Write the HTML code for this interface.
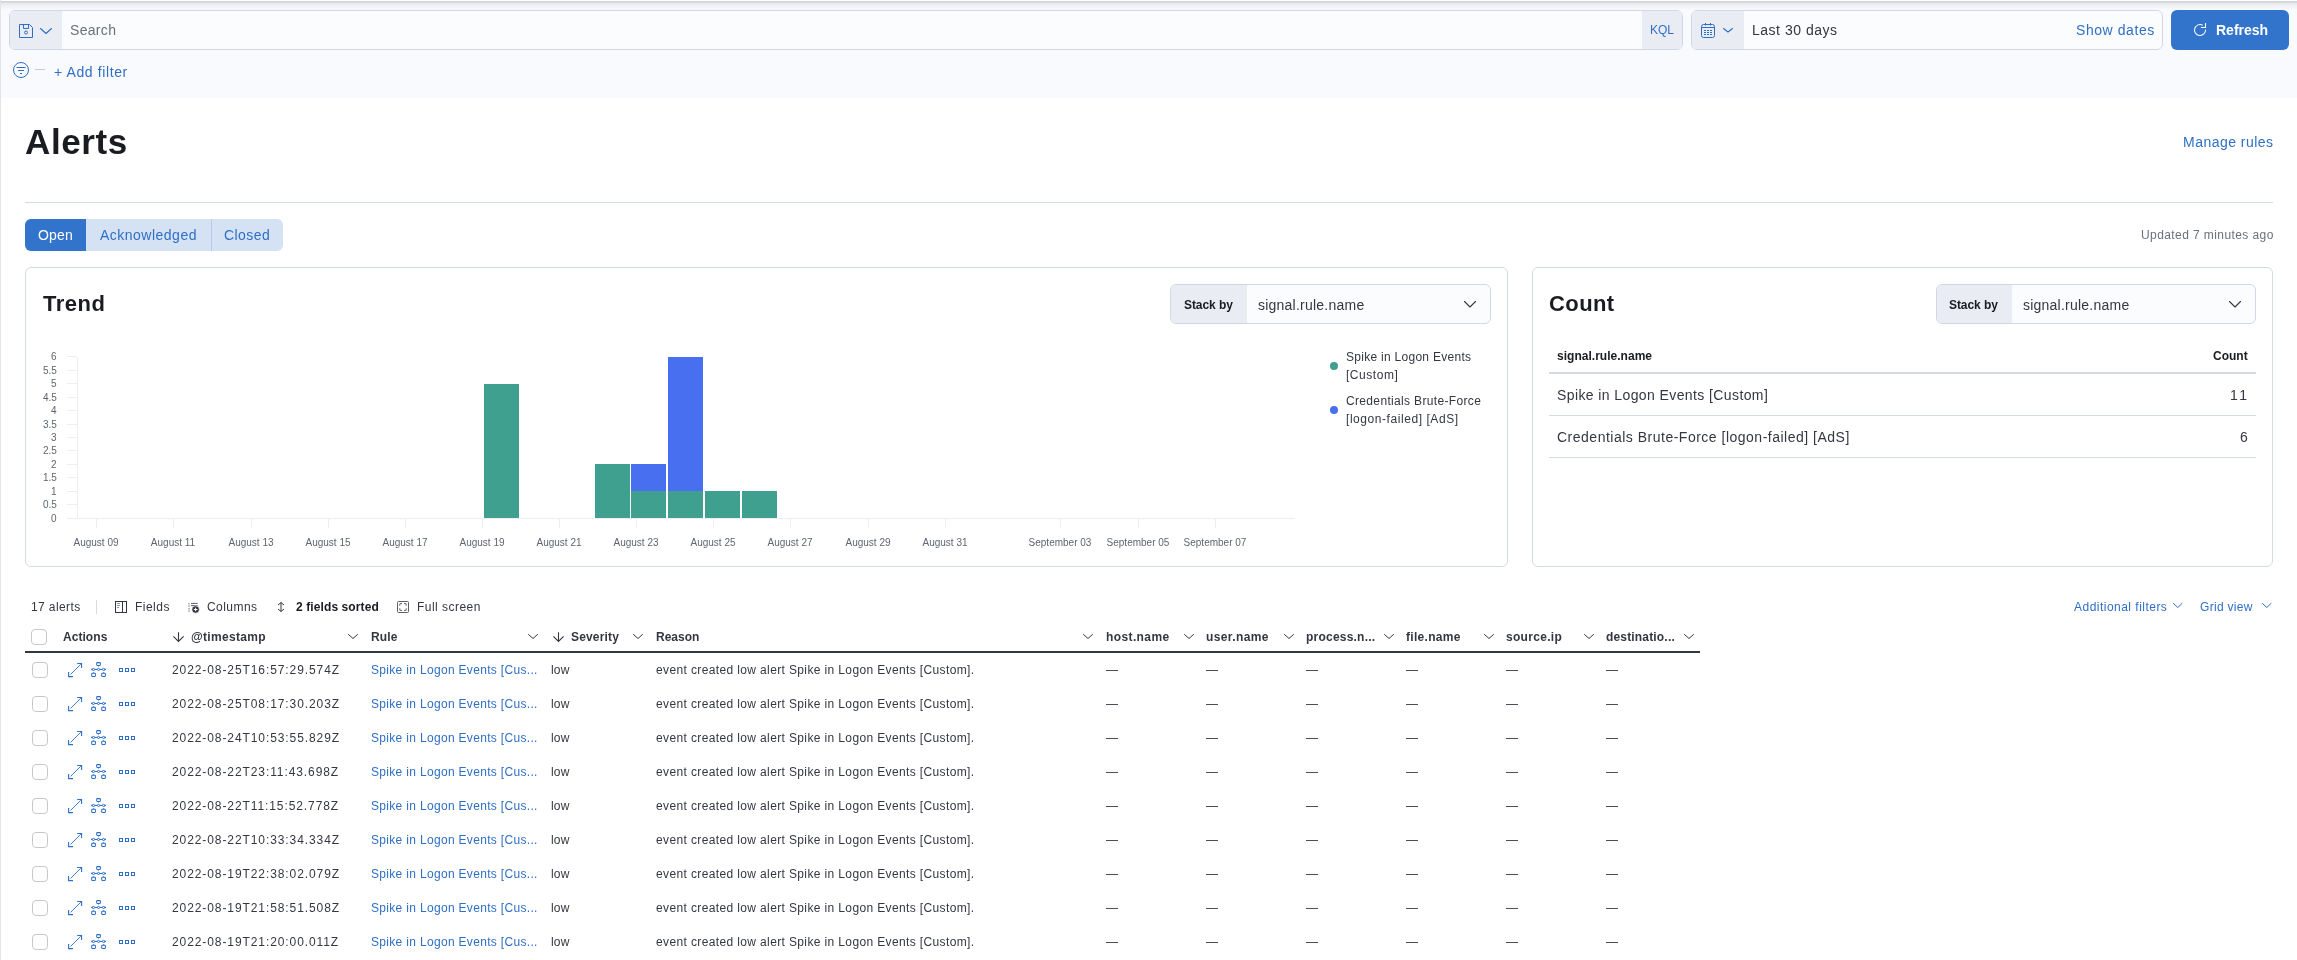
<!DOCTYPE html>
<html><head><meta charset="utf-8">
<style>
html,body{margin:0;padding:0;}
body{width:2297px;height:960px;overflow:hidden;position:relative;background:#fff;font-family:"Liberation Sans",sans-serif;color:#343741;}
.a{position:absolute;white-space:nowrap;will-change:transform;}
svg{position:absolute;overflow:visible;}
.box{position:absolute;box-sizing:border-box;border:1px solid #d3d6e6;border-radius:6px;background:#fbfcfd;overflow:hidden;}
.pre{position:absolute;top:0;bottom:0;background:#e9ecf3;}
.panel{position:absolute;box-sizing:border-box;border:1px solid #d3dae6;border-radius:6px;background:#fff;}
</style></head><body>
<div class="a" style="left:0px;top:0px;width:2297px;height:98px;background:#f9fafd;"></div>
<div class="a" style="left:0px;top:0px;width:2297px;height:10px;background:linear-gradient(#ffffff 0px 1px,#ced2dd 1px 2px,#dcdcdf 2px 3px,#e7e8ea 3px 4px,#ecedf0 4px 5px,#eff0f3 5px 6px,#f2f3f6 6px 7px,#f4f5f8 7px 8px,#f6f7fa 8px 9px,#f8f9fc 9px 10px);"></div>
<div class="a" style="left:0px;top:0px;width:1px;height:960px;background:#e3e4e9;z-index:5;"></div>
<div class="box" style="left:9px;top:10px;width:1674px;height:40px;"><div class="pre" style="left:0;width:52px;"></div><div class="pre" style="left:1632px;width:42px;"></div></div>
<svg style="left:19px;top:24px;" width="14" height="14" viewBox="0 0 14 14"><path d="M0.5 0.5 H10.5 L13.5 3.5 V13.5 H0.5 Z" fill="none" stroke="#2d6fc7" stroke-width="1"/><path d="M4.5 0.5 V4.5 H9.5 V0.5" fill="none" stroke="#2d6fc7" stroke-width="1"/><circle cx="7" cy="8.5" r="1.5" fill="none" stroke="#2d6fc7" stroke-width="1"/></svg>
<svg style="left:40px;top:28px;" width="12" height="6" viewBox="0 0 12 6"><path d="M0.5 0.5 L6.0 5.5 L11.5 0.5" fill="none" stroke="#2d6fc7" stroke-width="1.1" stroke-linecap="round" stroke-linejoin="round"/></svg>
<div class="a" style="left:70px;top:22px;font-size:14px;font-weight:400;color:#69707d;letter-spacing:0.32px;">Search</div>
<div class="a" style="left:1650px;top:23px;font-size:12px;font-weight:400;color:#2f6fc6;letter-spacing:0px;">KQL</div>
<div class="box" style="left:1691px;top:10px;width:472px;height:40px;"><div class="pre" style="left:0;width:52px;"></div></div>
<svg style="left:1701px;top:23px;" width="14" height="15" viewBox="0 0 14 15"><rect x="0.5" y="1.5" width="13" height="13" rx="2" fill="none" stroke="#2d6fc7" stroke-width="1"/><path d="M0.5 4.5 H13.5 M4.5 0 V2.5 M9.5 0 V2.5" stroke="#2d6fc7" stroke-width="1"/><path d="M3 7.5 H5 M6 7.5 H8 M9 7.5 H11 M3 9.5 H5 M6 9.5 H8 M9 9.5 H11 M3 11.5 H5 M6 11.5 H8 M9 11.5 H11" stroke="#2d6fc7" stroke-width="1"/></svg>
<svg style="left:1723px;top:28px;" width="10" height="4.5" viewBox="0 0 10 4.5"><path d="M0.5 0.5 L5.0 4.0 L9.5 0.5" fill="none" stroke="#2d6fc7" stroke-width="1.1" stroke-linecap="round" stroke-linejoin="round"/></svg>
<div class="a" style="left:1752px;top:22px;font-size:14px;font-weight:400;color:#343741;letter-spacing:0.51px;">Last 30 days</div>
<div class="a" style="left:2076px;top:22px;font-size:14px;font-weight:400;color:#2f6fc6;letter-spacing:0.57px;">Show dates</div>
<div class="a" style="left:2171px;top:10px;width:118px;height:40px;background:#3274cc;border-radius:6px;"></div>
<svg style="left:2194px;top:22px;" width="12" height="14" viewBox="0 0 12 14"><path d="M8.75 3.24 A5.5 5.5 0 1 0 11.5 7.6" fill="none" stroke="#fff" stroke-width="1.05"/><path d="M11.5 0.9 V5.5 H7" fill="none" stroke="#fff" stroke-width="1.05"/></svg>
<div class="a" style="left:2216px;top:22px;font-size:14px;font-weight:700;color:#fff;letter-spacing:0px;">Refresh</div>
<svg style="left:13px;top:62px;" width="16" height="16" viewBox="0 0 16 16"><circle cx="8" cy="8" r="7.5" fill="none" stroke="#2d6fc7" stroke-width="1"/><path d="M3.5 5.5 H12.5 M5 8.5 H11 M7 11.5 H9" stroke="#2d6fc7" stroke-width="1"/></svg>
<div class="a" style="left:35px;top:69px;width:10px;height:1px;background:#c5cbd8;"></div>
<div class="a" style="left:54px;top:64px;font-size:14px;font-weight:400;color:#2f6fc6;letter-spacing:0.61px;">+ Add filter</div>
<div class="a" style="left:25px;top:122px;font-size:35px;font-weight:700;color:#1a1c21;letter-spacing:0.6px;">Alerts</div>
<div class="a" style="left:2183px;top:134px;font-size:14px;font-weight:400;color:#2f6fc6;letter-spacing:0.47px;">Manage rules</div>
<div class="a" style="left:25px;top:202px;width:2248px;height:1px;background:#d3dae6;"></div>
<div class="a" style="left:25px;top:219px;width:258px;height:32px;border-radius:6px;background:#d5e2f3;overflow:hidden;"><div class="a" style="left:0;top:0;width:61px;height:32px;background:#3274cc;"></div><div class="a" style="left:186px;top:0;width:1px;height:32px;background:#b6cae8;"></div></div>
<div class="a" style="left:38px;top:227px;font-size:14px;font-weight:400;color:#fff;letter-spacing:0.17px;">Open</div>
<div class="a" style="left:100px;top:227px;font-size:14px;font-weight:400;color:#2f6fc6;letter-spacing:0.49px;">Acknowledged</div>
<div class="a" style="left:224px;top:227px;font-size:14px;font-weight:400;color:#2f6fc6;letter-spacing:0.44px;">Closed</div>
<div class="a" style="left:2141px;top:228px;font-size:12px;font-weight:400;color:#69707d;letter-spacing:0.415px;">Updated 7 minutes ago</div>
<div class="panel" style="left:25px;top:267px;width:1483px;height:300px;"></div>
<div class="panel" style="left:1532px;top:267px;width:741px;height:300px;"></div>
<div class="a" style="left:43px;top:291px;font-size:22px;font-weight:700;color:#1a1c21;letter-spacing:0.5px;">Trend</div>
<div class="a" style="left:1549px;top:291px;font-size:22px;font-weight:700;color:#1a1c21;letter-spacing:0.4px;">Count</div>
<div class="box" style="left:1170px;top:284px;width:321px;height:40px;"><div class="pre" style="left:0;width:76px;"></div></div>
<div class="a" style="left:1184px;top:298px;font-size:12px;font-weight:700;color:#1a1c21;letter-spacing:-0.07px;">Stack by</div>
<div class="a" style="left:1258px;top:297px;font-size:14px;font-weight:400;color:#343741;letter-spacing:0.23px;">signal.rule.name</div>
<svg style="left:1464px;top:301px;" width="12" height="6.5" viewBox="0 0 12 6.5"><path d="M0.5 0.5 L6.0 6.0 L11.5 0.5" fill="none" stroke="#343741" stroke-width="1.1" stroke-linecap="round" stroke-linejoin="round"/></svg>
<div class="box" style="left:1936px;top:284px;width:320px;height:40px;"><div class="pre" style="left:0;width:75px;"></div></div>
<div class="a" style="left:1949px;top:298px;font-size:12px;font-weight:700;color:#1a1c21;letter-spacing:-0.07px;">Stack by</div>
<div class="a" style="left:2023px;top:297px;font-size:14px;font-weight:400;color:#343741;letter-spacing:0.23px;">signal.rule.name</div>
<svg style="left:2229px;top:301px;" width="12" height="6.5" viewBox="0 0 12 6.5"><path d="M0.5 0.5 L6.0 6.0 L11.5 0.5" fill="none" stroke="#343741" stroke-width="1.1" stroke-linecap="round" stroke-linejoin="round"/></svg>
<div class="a" style="left:77px;top:357px;width:1px;height:161px;background:#eceef2;"></div>
<div class="a" style="left:67px;top:518px;width:1228px;height:1px;background:#eceef2;"></div>
<div class="a" style="left:67px;top:518px;width:10px;height:1px;background:#eceef2;"></div>
<div class="a" style="right:2240px;top:513px;font-size:10px;color:#5f6570;">0</div>
<div class="a" style="left:67px;top:504px;width:10px;height:1px;background:#eceef2;"></div>
<div class="a" style="right:2240px;top:499px;font-size:10px;color:#5f6570;">0.5</div>
<div class="a" style="left:67px;top:491px;width:10px;height:1px;background:#eceef2;"></div>
<div class="a" style="right:2240px;top:486px;font-size:10px;color:#5f6570;">1</div>
<div class="a" style="left:67px;top:477px;width:10px;height:1px;background:#eceef2;"></div>
<div class="a" style="right:2240px;top:472px;font-size:10px;color:#5f6570;">1.5</div>
<div class="a" style="left:67px;top:464px;width:10px;height:1px;background:#eceef2;"></div>
<div class="a" style="right:2240px;top:459px;font-size:10px;color:#5f6570;">2</div>
<div class="a" style="left:67px;top:450px;width:10px;height:1px;background:#eceef2;"></div>
<div class="a" style="right:2240px;top:445px;font-size:10px;color:#5f6570;">2.5</div>
<div class="a" style="left:67px;top:437px;width:10px;height:1px;background:#eceef2;"></div>
<div class="a" style="right:2240px;top:432px;font-size:10px;color:#5f6570;">3</div>
<div class="a" style="left:67px;top:424px;width:10px;height:1px;background:#eceef2;"></div>
<div class="a" style="right:2240px;top:419px;font-size:10px;color:#5f6570;">3.5</div>
<div class="a" style="left:67px;top:410px;width:10px;height:1px;background:#eceef2;"></div>
<div class="a" style="right:2240px;top:405px;font-size:10px;color:#5f6570;">4</div>
<div class="a" style="left:67px;top:397px;width:10px;height:1px;background:#eceef2;"></div>
<div class="a" style="right:2240px;top:392px;font-size:10px;color:#5f6570;">4.5</div>
<div class="a" style="left:67px;top:383px;width:10px;height:1px;background:#eceef2;"></div>
<div class="a" style="right:2240px;top:378px;font-size:10px;color:#5f6570;">5</div>
<div class="a" style="left:67px;top:370px;width:10px;height:1px;background:#eceef2;"></div>
<div class="a" style="right:2240px;top:365px;font-size:10px;color:#5f6570;">5.5</div>
<div class="a" style="left:67px;top:356px;width:10px;height:1px;background:#eceef2;"></div>
<div class="a" style="right:2240px;top:351px;font-size:10px;color:#5f6570;">6</div>
<div class="a" style="left:96px;top:518px;width:1px;height:10px;background:#eceef2;"></div>
<div class="a" style="left:-4px;width:200px;text-align:center;top:537px;font-size:10px;color:#5f6570;">August 09</div>
<div class="a" style="left:173px;top:518px;width:1px;height:10px;background:#eceef2;"></div>
<div class="a" style="left:73px;width:200px;text-align:center;top:537px;font-size:10px;color:#5f6570;">August 11</div>
<div class="a" style="left:251px;top:518px;width:1px;height:10px;background:#eceef2;"></div>
<div class="a" style="left:151px;width:200px;text-align:center;top:537px;font-size:10px;color:#5f6570;">August 13</div>
<div class="a" style="left:328px;top:518px;width:1px;height:10px;background:#eceef2;"></div>
<div class="a" style="left:228px;width:200px;text-align:center;top:537px;font-size:10px;color:#5f6570;">August 15</div>
<div class="a" style="left:405px;top:518px;width:1px;height:10px;background:#eceef2;"></div>
<div class="a" style="left:305px;width:200px;text-align:center;top:537px;font-size:10px;color:#5f6570;">August 17</div>
<div class="a" style="left:482px;top:518px;width:1px;height:10px;background:#eceef2;"></div>
<div class="a" style="left:382px;width:200px;text-align:center;top:537px;font-size:10px;color:#5f6570;">August 19</div>
<div class="a" style="left:559px;top:518px;width:1px;height:10px;background:#eceef2;"></div>
<div class="a" style="left:459px;width:200px;text-align:center;top:537px;font-size:10px;color:#5f6570;">August 21</div>
<div class="a" style="left:636px;top:518px;width:1px;height:10px;background:#eceef2;"></div>
<div class="a" style="left:536px;width:200px;text-align:center;top:537px;font-size:10px;color:#5f6570;">August 23</div>
<div class="a" style="left:713px;top:518px;width:1px;height:10px;background:#eceef2;"></div>
<div class="a" style="left:613px;width:200px;text-align:center;top:537px;font-size:10px;color:#5f6570;">August 25</div>
<div class="a" style="left:790px;top:518px;width:1px;height:10px;background:#eceef2;"></div>
<div class="a" style="left:690px;width:200px;text-align:center;top:537px;font-size:10px;color:#5f6570;">August 27</div>
<div class="a" style="left:868px;top:518px;width:1px;height:10px;background:#eceef2;"></div>
<div class="a" style="left:768px;width:200px;text-align:center;top:537px;font-size:10px;color:#5f6570;">August 29</div>
<div class="a" style="left:945px;top:518px;width:1px;height:10px;background:#eceef2;"></div>
<div class="a" style="left:845px;width:200px;text-align:center;top:537px;font-size:10px;color:#5f6570;">August 31</div>
<div class="a" style="left:1060px;top:518px;width:1px;height:10px;background:#eceef2;"></div>
<div class="a" style="left:960px;width:200px;text-align:center;top:537px;font-size:10px;color:#5f6570;">September 03</div>
<div class="a" style="left:1138px;top:518px;width:1px;height:10px;background:#eceef2;"></div>
<div class="a" style="left:1038px;width:200px;text-align:center;top:537px;font-size:10px;color:#5f6570;">September 05</div>
<div class="a" style="left:1215px;top:518px;width:1px;height:10px;background:#eceef2;"></div>
<div class="a" style="left:1115px;width:200px;text-align:center;top:537px;font-size:10px;color:#5f6570;">September 07</div>
<div class="a" style="left:483.75px;top:383.55px;width:35.1px;height:134.15px;background:#3fa08f;"></div>
<div class="a" style="left:594.5px;top:464.04px;width:35.1px;height:53.66px;background:#3fa08f;"></div>
<div class="a" style="left:631.4px;top:490.87px;width:35.1px;height:26.83px;background:#3fa08f;"></div>
<div class="a" style="left:631.4px;top:464.04px;width:35.1px;height:26.83px;background:#476ff0;"></div>
<div class="a" style="left:668.3px;top:490.87px;width:35.1px;height:26.83px;background:#3fa08f;"></div>
<div class="a" style="left:668.3px;top:356.72px;width:35.1px;height:134.15px;background:#476ff0;"></div>
<div class="a" style="left:705.2px;top:490.87px;width:35.1px;height:26.83px;background:#3fa08f;"></div>
<div class="a" style="left:742.1px;top:490.87px;width:35.1px;height:26.83px;background:#3fa08f;"></div>
<svg style="left:1330px;top:362px;" width="8" height="8" viewBox="0 0 8 8"><circle cx="4" cy="4" r="4" fill="#3fa08f"/></svg>
<svg style="left:1330px;top:406px;" width="8" height="8" viewBox="0 0 8 8"><circle cx="4" cy="4" r="4" fill="#476ff0"/></svg>
<div class="a" style="left:1346px;top:350px;font-size:12px;font-weight:400;color:#343741;letter-spacing:0.28px;">Spike in Logon Events</div>
<div class="a" style="left:1346px;top:368px;font-size:12px;font-weight:400;color:#343741;letter-spacing:0.54px;">[Custom]</div>
<div class="a" style="left:1346px;top:394px;font-size:12px;font-weight:400;color:#343741;letter-spacing:0.34px;">Credentials Brute-Force</div>
<div class="a" style="left:1346px;top:412px;font-size:12px;font-weight:400;color:#343741;letter-spacing:0.56px;">[logon-failed] [AdS]</div>
<div class="a" style="left:1557px;top:349px;font-size:12px;font-weight:700;color:#1a1c21;letter-spacing:0.02px;">signal.rule.name</div>
<div class="a" style="right:49px;top:349px;font-size:12px;font-weight:700;color:#1a1c21;">Count</div>
<div class="a" style="left:1549px;top:372px;width:707px;height:2px;background:#d3dae6;"></div>
<div class="a" style="left:1557px;top:387px;font-size:14px;font-weight:400;color:#343741;letter-spacing:0.4px;">Spike in Logon Events [Custom]</div>
<div class="a" style="right:50px;top:387px;font-size:14px;color:#343741;letter-spacing:1.5px;">1<span style="letter-spacing:0">1</span></div>
<div class="a" style="left:1549px;top:415px;width:707px;height:1px;background:#d3dae6;"></div>
<div class="a" style="left:1557px;top:429px;font-size:14px;font-weight:400;color:#343741;letter-spacing:0.5px;">Credentials Brute-Force [logon-failed] [AdS]</div>
<div class="a" style="right:49px;top:429px;font-size:14px;color:#343741;">6</div>
<div class="a" style="left:1549px;top:457px;width:707px;height:1px;background:#d3dae6;"></div>
<div class="a" style="left:31px;top:600px;font-size:12px;font-weight:400;color:#343741;letter-spacing:0.39px;">17 alerts</div>
<div class="a" style="left:96px;top:600px;width:1px;height:14px;background:#d3dae6;"></div>
<svg style="left:115px;top:601px;" width="12" height="12" viewBox="0 0 12 12"><rect x="0.5" y="0.5" width="11" height="11" fill="none" stroke="#343741" stroke-width="1"/><path d="M7.5 0.5 V11.5" stroke="#343741" stroke-width="1"/><path d="M2 2.5 H5 M2 4.5 H5 M2 6.5 H4.2" stroke="#343741" stroke-width="0.7" opacity="0.75"/></svg>
<div class="a" style="left:135px;top:600px;font-size:12px;font-weight:400;color:#343741;letter-spacing:0.48px;">Fields</div>
<svg style="left:188px;top:602px;" width="13" height="12" viewBox="0 0 13 12"><path d="M1 1.4 V2.4 M1 3.6 V4.6 M1 6.3 V7.3 M1 8.5 V9.5" stroke="#343741" stroke-width="1"/><path d="M3 1.4 H9.6 M3 3.6 H9.6" stroke="#343741" stroke-width="0.9" opacity="0.9"/><circle cx="7.6" cy="7.5" r="3.7" fill="#343741" stroke="#fff" stroke-width="0.6"/><path d="M7.6 5.7 V9.3 M5.8 7.5 H9.4" stroke="#fff" stroke-width="1"/></svg>
<div class="a" style="left:207px;top:600px;font-size:12px;font-weight:400;color:#343741;letter-spacing:0.45px;">Columns</div>
<svg style="left:277px;top:602px;" width="8" height="10" viewBox="0 0 8 10"><path d="M4 0.5 V9.5 M1 3 L4 0.5 L7 3 M1 7 L4 9.5 L7 7" fill="none" stroke="#343741" stroke-width="1"/></svg>
<div class="a" style="left:296px;top:600px;font-size:12px;font-weight:700;color:#1a1c21;letter-spacing:0.1px;">2 fields sorted</div>
<svg style="left:397px;top:601px;" width="12" height="12" viewBox="0 0 12 12"><rect x="0.5" y="0.5" width="11" height="11" rx="1" fill="none" stroke="#5a5f6b" stroke-width="1"/><path d="M2.8 4.7 V3 Q2.8 2.6 3.2 2.6 H5 M7 2.6 H8.8 Q9.2 2.6 9.2 3 V4.7 M9.2 7.3 V9 Q9.2 9.4 8.8 9.4 H7 M5 9.4 H3.2 Q2.8 9.4 2.8 9 V7.3" fill="none" stroke="#5a5f6b" stroke-width="1"/></svg>
<div class="a" style="left:417px;top:600px;font-size:12px;font-weight:400;color:#343741;letter-spacing:0.47px;">Full screen</div>
<div class="a" style="left:2074px;top:600px;font-size:12px;font-weight:400;color:#2f6fc6;letter-spacing:0.48px;">Additional filters</div>
<svg style="left:2173px;top:603px;" width="9.5" height="5" viewBox="0 0 9.5 5"><path d="M0.5 0.5 L4.75 4.5 L9.0 0.5" fill="none" stroke="#2f6fc6" stroke-width="1" stroke-linecap="round" stroke-linejoin="round"/></svg>
<div class="a" style="left:2200px;top:600px;font-size:12px;font-weight:400;color:#2f6fc6;letter-spacing:0.3px;">Grid view</div>
<svg style="left:2262px;top:603px;" width="9.5" height="5" viewBox="0 0 9.5 5"><path d="M0.5 0.5 L4.75 4.5 L9.0 0.5" fill="none" stroke="#2f6fc6" stroke-width="1" stroke-linecap="round" stroke-linejoin="round"/></svg>
<div class="a" style="left:31px;top:629px;width:16px;height:16px;box-sizing:border-box;border:1px solid #c6c8cc;border-radius:4px;background:#fff;"></div>
<div class="a" style="left:63px;top:630px;font-size:12px;font-weight:700;color:#343741;letter-spacing:0.05px;">Actions</div>
<svg style="left:173px;top:631px;" width="11" height="11" viewBox="0 0 11 11"><path d="M5.5 1.2 V10.5 M0.4 5.4 L5.5 10.5 L10.6 5.4" fill="none" stroke="#343741" stroke-width="1.1"/></svg>
<div class="a" style="left:191px;top:630px;font-size:12px;font-weight:700;color:#343741;letter-spacing:0.31px;">@timestamp</div>
<svg style="left:348px;top:634px;" width="10" height="5" viewBox="0 0 10 5"><path d="M0.5 0.5 L5.0 4.5 L9.5 0.5" fill="none" stroke="#343741" stroke-width="1" stroke-linecap="round" stroke-linejoin="round"/></svg>
<div class="a" style="left:371px;top:630px;font-size:12px;font-weight:700;color:#343741;letter-spacing:0.1px;">Rule</div>
<svg style="left:528px;top:634px;" width="10" height="5" viewBox="0 0 10 5"><path d="M0.5 0.5 L5.0 4.5 L9.5 0.5" fill="none" stroke="#343741" stroke-width="1" stroke-linecap="round" stroke-linejoin="round"/></svg>
<svg style="left:553px;top:631px;" width="11" height="11" viewBox="0 0 11 11"><path d="M5.5 1.2 V10.5 M0.4 5.4 L5.5 10.5 L10.6 5.4" fill="none" stroke="#343741" stroke-width="1.1"/></svg>
<div class="a" style="left:571px;top:630px;font-size:12px;font-weight:700;color:#343741;letter-spacing:0.16px;">Severity</div>
<svg style="left:633px;top:634px;" width="10" height="5" viewBox="0 0 10 5"><path d="M0.5 0.5 L5.0 4.5 L9.5 0.5" fill="none" stroke="#343741" stroke-width="1" stroke-linecap="round" stroke-linejoin="round"/></svg>
<div class="a" style="left:656px;top:630px;font-size:12px;font-weight:700;color:#343741;letter-spacing:0px;">Reason</div>
<svg style="left:1083px;top:634px;" width="10" height="5" viewBox="0 0 10 5"><path d="M0.5 0.5 L5.0 4.5 L9.5 0.5" fill="none" stroke="#343741" stroke-width="1" stroke-linecap="round" stroke-linejoin="round"/></svg>
<div class="a" style="left:1106px;top:630px;font-size:12px;font-weight:700;color:#343741;letter-spacing:0.39px;">host.name</div>
<svg style="left:1183.5px;top:634px;" width="10" height="5" viewBox="0 0 10 5"><path d="M0.5 0.5 L5.0 4.5 L9.5 0.5" fill="none" stroke="#343741" stroke-width="1" stroke-linecap="round" stroke-linejoin="round"/></svg>
<div class="a" style="left:1206px;top:630px;font-size:12px;font-weight:700;color:#343741;letter-spacing:0.38px;">user.name</div>
<svg style="left:1283.5px;top:634px;" width="10" height="5" viewBox="0 0 10 5"><path d="M0.5 0.5 L5.0 4.5 L9.5 0.5" fill="none" stroke="#343741" stroke-width="1" stroke-linecap="round" stroke-linejoin="round"/></svg>
<div class="a" style="left:1306px;top:630px;font-size:12px;font-weight:700;color:#343741;letter-spacing:0.22px;">process.n...</div>
<svg style="left:1383.5px;top:634px;" width="10" height="5" viewBox="0 0 10 5"><path d="M0.5 0.5 L5.0 4.5 L9.5 0.5" fill="none" stroke="#343741" stroke-width="1" stroke-linecap="round" stroke-linejoin="round"/></svg>
<div class="a" style="left:1406px;top:630px;font-size:12px;font-weight:700;color:#343741;letter-spacing:0.3px;">file.name</div>
<svg style="left:1483.5px;top:634px;" width="10" height="5" viewBox="0 0 10 5"><path d="M0.5 0.5 L5.0 4.5 L9.5 0.5" fill="none" stroke="#343741" stroke-width="1" stroke-linecap="round" stroke-linejoin="round"/></svg>
<div class="a" style="left:1506px;top:630px;font-size:12px;font-weight:700;color:#343741;letter-spacing:0.3px;">source.ip</div>
<svg style="left:1583.5px;top:634px;" width="10" height="5" viewBox="0 0 10 5"><path d="M0.5 0.5 L5.0 4.5 L9.5 0.5" fill="none" stroke="#343741" stroke-width="1" stroke-linecap="round" stroke-linejoin="round"/></svg>
<div class="a" style="left:1606px;top:630px;font-size:12px;font-weight:700;color:#343741;letter-spacing:0.17px;">destinatio...</div>
<svg style="left:1683.5px;top:634px;" width="10" height="5" viewBox="0 0 10 5"><path d="M0.5 0.5 L5.0 4.5 L9.5 0.5" fill="none" stroke="#343741" stroke-width="1" stroke-linecap="round" stroke-linejoin="round"/></svg>
<div class="a" style="left:25px;top:651px;width:1675px;height:2px;background:#343741;"></div>
<div class="a" style="left:32px;top:662px;width:16px;height:16px;box-sizing:border-box;border:1px solid #c6c8cc;border-radius:4px;background:#fff;"></div>
<svg style="left:68px;top:663px;" width="14" height="14" viewBox="0 0 14 14"><path d="M0.6 9 V13.6 H5 M9.2 0.5 H13.6 V5" fill="none" stroke="#2d6fc7" stroke-width="1.1"/><path d="M2.6 11.4 L12.8 1.2" fill="none" stroke="#2d6fc7" stroke-width="0.9"/></svg>
<svg style="left:91px;top:662px;" width="15" height="15" viewBox="0 0 15 15"><rect x="5.7" y="0.6" width="3.7" height="2.8" rx="0.6" fill="none" stroke="#2d6fc7" stroke-width="1.05"/><path d="M6.8 3.6 L7.55 4.9 L8.3 3.6 Z" fill="#2d6fc7"/><path d="M0.3 7.45 L1.4 6.8 M0.3 7.45 L1.4 8.1 M14.8 7.45 L13.7 6.8 M14.8 7.45 L13.7 8.1 M0.4 7.45 H14.7" stroke="#2d6fc7" stroke-width="1"/><rect x="0.7" y="11.3" width="3.7" height="3.1" rx="0.6" fill="none" stroke="#2d6fc7" stroke-width="1.05"/><rect x="10.7" y="11.3" width="3.7" height="3.1" rx="0.6" fill="none" stroke="#2d6fc7" stroke-width="1.05"/><path d="M1.8 11 L2.55 9.9 L3.3 11 Z M11.8 11 L12.55 9.9 L13.3 11 Z" fill="#2d6fc7"/><circle cx="2.5" cy="7.45" r="1.1" fill="#fff" stroke="#2d6fc7" stroke-width="0.95"/><circle cx="7.5" cy="7.45" r="1.1" fill="#fff" stroke="#2d6fc7" stroke-width="0.95"/><circle cx="12.5" cy="7.45" r="1.1" fill="#fff" stroke="#2d6fc7" stroke-width="0.95"/></svg>
<svg style="left:119px;top:668px;" width="16" height="4" viewBox="0 0 16 4"><rect x="0.5" y="0.5" width="3" height="3" fill="none" stroke="#2d6fc7" stroke-width="1"/><rect x="6.5" y="0.5" width="3" height="3" fill="none" stroke="#2d6fc7" stroke-width="1"/><rect x="12.5" y="0.5" width="3" height="3" fill="none" stroke="#2d6fc7" stroke-width="1"/></svg>
<div class="a" style="left:172px;top:663px;font-size:12px;font-weight:400;color:#343741;letter-spacing:0.91px;">2022-08-25T16:57:29.574Z</div>
<div class="a" style="left:371px;top:663px;font-size:12px;font-weight:400;color:#2f6fc6;letter-spacing:0.32px;">Spike in Logon Events [Cus...</div>
<div class="a" style="left:551px;top:663px;font-size:12px;font-weight:400;color:#343741;letter-spacing:0.2px;">low</div>
<div class="a" style="left:656px;top:663px;font-size:12px;font-weight:400;color:#343741;letter-spacing:0.37px;">event created low alert Spike in Logon Events [Custom].</div>
<div class="a" style="left:1106px;top:670px;width:12px;height:1px;background:#4a4e58;"></div>
<div class="a" style="left:1206px;top:670px;width:12px;height:1px;background:#4a4e58;"></div>
<div class="a" style="left:1306px;top:670px;width:12px;height:1px;background:#4a4e58;"></div>
<div class="a" style="left:1406px;top:670px;width:12px;height:1px;background:#4a4e58;"></div>
<div class="a" style="left:1506px;top:670px;width:12px;height:1px;background:#4a4e58;"></div>
<div class="a" style="left:1606px;top:670px;width:12px;height:1px;background:#4a4e58;"></div>
<div class="a" style="left:32px;top:696px;width:16px;height:16px;box-sizing:border-box;border:1px solid #c6c8cc;border-radius:4px;background:#fff;"></div>
<svg style="left:68px;top:697px;" width="14" height="14" viewBox="0 0 14 14"><path d="M0.6 9 V13.6 H5 M9.2 0.5 H13.6 V5" fill="none" stroke="#2d6fc7" stroke-width="1.1"/><path d="M2.6 11.4 L12.8 1.2" fill="none" stroke="#2d6fc7" stroke-width="0.9"/></svg>
<svg style="left:91px;top:696px;" width="15" height="15" viewBox="0 0 15 15"><rect x="5.7" y="0.6" width="3.7" height="2.8" rx="0.6" fill="none" stroke="#2d6fc7" stroke-width="1.05"/><path d="M6.8 3.6 L7.55 4.9 L8.3 3.6 Z" fill="#2d6fc7"/><path d="M0.3 7.45 L1.4 6.8 M0.3 7.45 L1.4 8.1 M14.8 7.45 L13.7 6.8 M14.8 7.45 L13.7 8.1 M0.4 7.45 H14.7" stroke="#2d6fc7" stroke-width="1"/><rect x="0.7" y="11.3" width="3.7" height="3.1" rx="0.6" fill="none" stroke="#2d6fc7" stroke-width="1.05"/><rect x="10.7" y="11.3" width="3.7" height="3.1" rx="0.6" fill="none" stroke="#2d6fc7" stroke-width="1.05"/><path d="M1.8 11 L2.55 9.9 L3.3 11 Z M11.8 11 L12.55 9.9 L13.3 11 Z" fill="#2d6fc7"/><circle cx="2.5" cy="7.45" r="1.1" fill="#fff" stroke="#2d6fc7" stroke-width="0.95"/><circle cx="7.5" cy="7.45" r="1.1" fill="#fff" stroke="#2d6fc7" stroke-width="0.95"/><circle cx="12.5" cy="7.45" r="1.1" fill="#fff" stroke="#2d6fc7" stroke-width="0.95"/></svg>
<svg style="left:119px;top:702px;" width="16" height="4" viewBox="0 0 16 4"><rect x="0.5" y="0.5" width="3" height="3" fill="none" stroke="#2d6fc7" stroke-width="1"/><rect x="6.5" y="0.5" width="3" height="3" fill="none" stroke="#2d6fc7" stroke-width="1"/><rect x="12.5" y="0.5" width="3" height="3" fill="none" stroke="#2d6fc7" stroke-width="1"/></svg>
<div class="a" style="left:172px;top:697px;font-size:12px;font-weight:400;color:#343741;letter-spacing:0.91px;">2022-08-25T08:17:30.203Z</div>
<div class="a" style="left:371px;top:697px;font-size:12px;font-weight:400;color:#2f6fc6;letter-spacing:0.32px;">Spike in Logon Events [Cus...</div>
<div class="a" style="left:551px;top:697px;font-size:12px;font-weight:400;color:#343741;letter-spacing:0.2px;">low</div>
<div class="a" style="left:656px;top:697px;font-size:12px;font-weight:400;color:#343741;letter-spacing:0.37px;">event created low alert Spike in Logon Events [Custom].</div>
<div class="a" style="left:1106px;top:704px;width:12px;height:1px;background:#4a4e58;"></div>
<div class="a" style="left:1206px;top:704px;width:12px;height:1px;background:#4a4e58;"></div>
<div class="a" style="left:1306px;top:704px;width:12px;height:1px;background:#4a4e58;"></div>
<div class="a" style="left:1406px;top:704px;width:12px;height:1px;background:#4a4e58;"></div>
<div class="a" style="left:1506px;top:704px;width:12px;height:1px;background:#4a4e58;"></div>
<div class="a" style="left:1606px;top:704px;width:12px;height:1px;background:#4a4e58;"></div>
<div class="a" style="left:32px;top:730px;width:16px;height:16px;box-sizing:border-box;border:1px solid #c6c8cc;border-radius:4px;background:#fff;"></div>
<svg style="left:68px;top:731px;" width="14" height="14" viewBox="0 0 14 14"><path d="M0.6 9 V13.6 H5 M9.2 0.5 H13.6 V5" fill="none" stroke="#2d6fc7" stroke-width="1.1"/><path d="M2.6 11.4 L12.8 1.2" fill="none" stroke="#2d6fc7" stroke-width="0.9"/></svg>
<svg style="left:91px;top:730px;" width="15" height="15" viewBox="0 0 15 15"><rect x="5.7" y="0.6" width="3.7" height="2.8" rx="0.6" fill="none" stroke="#2d6fc7" stroke-width="1.05"/><path d="M6.8 3.6 L7.55 4.9 L8.3 3.6 Z" fill="#2d6fc7"/><path d="M0.3 7.45 L1.4 6.8 M0.3 7.45 L1.4 8.1 M14.8 7.45 L13.7 6.8 M14.8 7.45 L13.7 8.1 M0.4 7.45 H14.7" stroke="#2d6fc7" stroke-width="1"/><rect x="0.7" y="11.3" width="3.7" height="3.1" rx="0.6" fill="none" stroke="#2d6fc7" stroke-width="1.05"/><rect x="10.7" y="11.3" width="3.7" height="3.1" rx="0.6" fill="none" stroke="#2d6fc7" stroke-width="1.05"/><path d="M1.8 11 L2.55 9.9 L3.3 11 Z M11.8 11 L12.55 9.9 L13.3 11 Z" fill="#2d6fc7"/><circle cx="2.5" cy="7.45" r="1.1" fill="#fff" stroke="#2d6fc7" stroke-width="0.95"/><circle cx="7.5" cy="7.45" r="1.1" fill="#fff" stroke="#2d6fc7" stroke-width="0.95"/><circle cx="12.5" cy="7.45" r="1.1" fill="#fff" stroke="#2d6fc7" stroke-width="0.95"/></svg>
<svg style="left:119px;top:736px;" width="16" height="4" viewBox="0 0 16 4"><rect x="0.5" y="0.5" width="3" height="3" fill="none" stroke="#2d6fc7" stroke-width="1"/><rect x="6.5" y="0.5" width="3" height="3" fill="none" stroke="#2d6fc7" stroke-width="1"/><rect x="12.5" y="0.5" width="3" height="3" fill="none" stroke="#2d6fc7" stroke-width="1"/></svg>
<div class="a" style="left:172px;top:731px;font-size:12px;font-weight:400;color:#343741;letter-spacing:0.91px;">2022-08-24T10:53:55.829Z</div>
<div class="a" style="left:371px;top:731px;font-size:12px;font-weight:400;color:#2f6fc6;letter-spacing:0.32px;">Spike in Logon Events [Cus...</div>
<div class="a" style="left:551px;top:731px;font-size:12px;font-weight:400;color:#343741;letter-spacing:0.2px;">low</div>
<div class="a" style="left:656px;top:731px;font-size:12px;font-weight:400;color:#343741;letter-spacing:0.37px;">event created low alert Spike in Logon Events [Custom].</div>
<div class="a" style="left:1106px;top:738px;width:12px;height:1px;background:#4a4e58;"></div>
<div class="a" style="left:1206px;top:738px;width:12px;height:1px;background:#4a4e58;"></div>
<div class="a" style="left:1306px;top:738px;width:12px;height:1px;background:#4a4e58;"></div>
<div class="a" style="left:1406px;top:738px;width:12px;height:1px;background:#4a4e58;"></div>
<div class="a" style="left:1506px;top:738px;width:12px;height:1px;background:#4a4e58;"></div>
<div class="a" style="left:1606px;top:738px;width:12px;height:1px;background:#4a4e58;"></div>
<div class="a" style="left:32px;top:764px;width:16px;height:16px;box-sizing:border-box;border:1px solid #c6c8cc;border-radius:4px;background:#fff;"></div>
<svg style="left:68px;top:765px;" width="14" height="14" viewBox="0 0 14 14"><path d="M0.6 9 V13.6 H5 M9.2 0.5 H13.6 V5" fill="none" stroke="#2d6fc7" stroke-width="1.1"/><path d="M2.6 11.4 L12.8 1.2" fill="none" stroke="#2d6fc7" stroke-width="0.9"/></svg>
<svg style="left:91px;top:764px;" width="15" height="15" viewBox="0 0 15 15"><rect x="5.7" y="0.6" width="3.7" height="2.8" rx="0.6" fill="none" stroke="#2d6fc7" stroke-width="1.05"/><path d="M6.8 3.6 L7.55 4.9 L8.3 3.6 Z" fill="#2d6fc7"/><path d="M0.3 7.45 L1.4 6.8 M0.3 7.45 L1.4 8.1 M14.8 7.45 L13.7 6.8 M14.8 7.45 L13.7 8.1 M0.4 7.45 H14.7" stroke="#2d6fc7" stroke-width="1"/><rect x="0.7" y="11.3" width="3.7" height="3.1" rx="0.6" fill="none" stroke="#2d6fc7" stroke-width="1.05"/><rect x="10.7" y="11.3" width="3.7" height="3.1" rx="0.6" fill="none" stroke="#2d6fc7" stroke-width="1.05"/><path d="M1.8 11 L2.55 9.9 L3.3 11 Z M11.8 11 L12.55 9.9 L13.3 11 Z" fill="#2d6fc7"/><circle cx="2.5" cy="7.45" r="1.1" fill="#fff" stroke="#2d6fc7" stroke-width="0.95"/><circle cx="7.5" cy="7.45" r="1.1" fill="#fff" stroke="#2d6fc7" stroke-width="0.95"/><circle cx="12.5" cy="7.45" r="1.1" fill="#fff" stroke="#2d6fc7" stroke-width="0.95"/></svg>
<svg style="left:119px;top:770px;" width="16" height="4" viewBox="0 0 16 4"><rect x="0.5" y="0.5" width="3" height="3" fill="none" stroke="#2d6fc7" stroke-width="1"/><rect x="6.5" y="0.5" width="3" height="3" fill="none" stroke="#2d6fc7" stroke-width="1"/><rect x="12.5" y="0.5" width="3" height="3" fill="none" stroke="#2d6fc7" stroke-width="1"/></svg>
<div class="a" style="left:172px;top:765px;font-size:12px;font-weight:400;color:#343741;letter-spacing:0.91px;">2022-08-22T23:11:43.698Z</div>
<div class="a" style="left:371px;top:765px;font-size:12px;font-weight:400;color:#2f6fc6;letter-spacing:0.32px;">Spike in Logon Events [Cus...</div>
<div class="a" style="left:551px;top:765px;font-size:12px;font-weight:400;color:#343741;letter-spacing:0.2px;">low</div>
<div class="a" style="left:656px;top:765px;font-size:12px;font-weight:400;color:#343741;letter-spacing:0.37px;">event created low alert Spike in Logon Events [Custom].</div>
<div class="a" style="left:1106px;top:772px;width:12px;height:1px;background:#4a4e58;"></div>
<div class="a" style="left:1206px;top:772px;width:12px;height:1px;background:#4a4e58;"></div>
<div class="a" style="left:1306px;top:772px;width:12px;height:1px;background:#4a4e58;"></div>
<div class="a" style="left:1406px;top:772px;width:12px;height:1px;background:#4a4e58;"></div>
<div class="a" style="left:1506px;top:772px;width:12px;height:1px;background:#4a4e58;"></div>
<div class="a" style="left:1606px;top:772px;width:12px;height:1px;background:#4a4e58;"></div>
<div class="a" style="left:32px;top:798px;width:16px;height:16px;box-sizing:border-box;border:1px solid #c6c8cc;border-radius:4px;background:#fff;"></div>
<svg style="left:68px;top:799px;" width="14" height="14" viewBox="0 0 14 14"><path d="M0.6 9 V13.6 H5 M9.2 0.5 H13.6 V5" fill="none" stroke="#2d6fc7" stroke-width="1.1"/><path d="M2.6 11.4 L12.8 1.2" fill="none" stroke="#2d6fc7" stroke-width="0.9"/></svg>
<svg style="left:91px;top:798px;" width="15" height="15" viewBox="0 0 15 15"><rect x="5.7" y="0.6" width="3.7" height="2.8" rx="0.6" fill="none" stroke="#2d6fc7" stroke-width="1.05"/><path d="M6.8 3.6 L7.55 4.9 L8.3 3.6 Z" fill="#2d6fc7"/><path d="M0.3 7.45 L1.4 6.8 M0.3 7.45 L1.4 8.1 M14.8 7.45 L13.7 6.8 M14.8 7.45 L13.7 8.1 M0.4 7.45 H14.7" stroke="#2d6fc7" stroke-width="1"/><rect x="0.7" y="11.3" width="3.7" height="3.1" rx="0.6" fill="none" stroke="#2d6fc7" stroke-width="1.05"/><rect x="10.7" y="11.3" width="3.7" height="3.1" rx="0.6" fill="none" stroke="#2d6fc7" stroke-width="1.05"/><path d="M1.8 11 L2.55 9.9 L3.3 11 Z M11.8 11 L12.55 9.9 L13.3 11 Z" fill="#2d6fc7"/><circle cx="2.5" cy="7.45" r="1.1" fill="#fff" stroke="#2d6fc7" stroke-width="0.95"/><circle cx="7.5" cy="7.45" r="1.1" fill="#fff" stroke="#2d6fc7" stroke-width="0.95"/><circle cx="12.5" cy="7.45" r="1.1" fill="#fff" stroke="#2d6fc7" stroke-width="0.95"/></svg>
<svg style="left:119px;top:804px;" width="16" height="4" viewBox="0 0 16 4"><rect x="0.5" y="0.5" width="3" height="3" fill="none" stroke="#2d6fc7" stroke-width="1"/><rect x="6.5" y="0.5" width="3" height="3" fill="none" stroke="#2d6fc7" stroke-width="1"/><rect x="12.5" y="0.5" width="3" height="3" fill="none" stroke="#2d6fc7" stroke-width="1"/></svg>
<div class="a" style="left:172px;top:799px;font-size:12px;font-weight:400;color:#343741;letter-spacing:0.91px;">2022-08-22T11:15:52.778Z</div>
<div class="a" style="left:371px;top:799px;font-size:12px;font-weight:400;color:#2f6fc6;letter-spacing:0.32px;">Spike in Logon Events [Cus...</div>
<div class="a" style="left:551px;top:799px;font-size:12px;font-weight:400;color:#343741;letter-spacing:0.2px;">low</div>
<div class="a" style="left:656px;top:799px;font-size:12px;font-weight:400;color:#343741;letter-spacing:0.37px;">event created low alert Spike in Logon Events [Custom].</div>
<div class="a" style="left:1106px;top:806px;width:12px;height:1px;background:#4a4e58;"></div>
<div class="a" style="left:1206px;top:806px;width:12px;height:1px;background:#4a4e58;"></div>
<div class="a" style="left:1306px;top:806px;width:12px;height:1px;background:#4a4e58;"></div>
<div class="a" style="left:1406px;top:806px;width:12px;height:1px;background:#4a4e58;"></div>
<div class="a" style="left:1506px;top:806px;width:12px;height:1px;background:#4a4e58;"></div>
<div class="a" style="left:1606px;top:806px;width:12px;height:1px;background:#4a4e58;"></div>
<div class="a" style="left:32px;top:832px;width:16px;height:16px;box-sizing:border-box;border:1px solid #c6c8cc;border-radius:4px;background:#fff;"></div>
<svg style="left:68px;top:833px;" width="14" height="14" viewBox="0 0 14 14"><path d="M0.6 9 V13.6 H5 M9.2 0.5 H13.6 V5" fill="none" stroke="#2d6fc7" stroke-width="1.1"/><path d="M2.6 11.4 L12.8 1.2" fill="none" stroke="#2d6fc7" stroke-width="0.9"/></svg>
<svg style="left:91px;top:832px;" width="15" height="15" viewBox="0 0 15 15"><rect x="5.7" y="0.6" width="3.7" height="2.8" rx="0.6" fill="none" stroke="#2d6fc7" stroke-width="1.05"/><path d="M6.8 3.6 L7.55 4.9 L8.3 3.6 Z" fill="#2d6fc7"/><path d="M0.3 7.45 L1.4 6.8 M0.3 7.45 L1.4 8.1 M14.8 7.45 L13.7 6.8 M14.8 7.45 L13.7 8.1 M0.4 7.45 H14.7" stroke="#2d6fc7" stroke-width="1"/><rect x="0.7" y="11.3" width="3.7" height="3.1" rx="0.6" fill="none" stroke="#2d6fc7" stroke-width="1.05"/><rect x="10.7" y="11.3" width="3.7" height="3.1" rx="0.6" fill="none" stroke="#2d6fc7" stroke-width="1.05"/><path d="M1.8 11 L2.55 9.9 L3.3 11 Z M11.8 11 L12.55 9.9 L13.3 11 Z" fill="#2d6fc7"/><circle cx="2.5" cy="7.45" r="1.1" fill="#fff" stroke="#2d6fc7" stroke-width="0.95"/><circle cx="7.5" cy="7.45" r="1.1" fill="#fff" stroke="#2d6fc7" stroke-width="0.95"/><circle cx="12.5" cy="7.45" r="1.1" fill="#fff" stroke="#2d6fc7" stroke-width="0.95"/></svg>
<svg style="left:119px;top:838px;" width="16" height="4" viewBox="0 0 16 4"><rect x="0.5" y="0.5" width="3" height="3" fill="none" stroke="#2d6fc7" stroke-width="1"/><rect x="6.5" y="0.5" width="3" height="3" fill="none" stroke="#2d6fc7" stroke-width="1"/><rect x="12.5" y="0.5" width="3" height="3" fill="none" stroke="#2d6fc7" stroke-width="1"/></svg>
<div class="a" style="left:172px;top:833px;font-size:12px;font-weight:400;color:#343741;letter-spacing:0.91px;">2022-08-22T10:33:34.334Z</div>
<div class="a" style="left:371px;top:833px;font-size:12px;font-weight:400;color:#2f6fc6;letter-spacing:0.32px;">Spike in Logon Events [Cus...</div>
<div class="a" style="left:551px;top:833px;font-size:12px;font-weight:400;color:#343741;letter-spacing:0.2px;">low</div>
<div class="a" style="left:656px;top:833px;font-size:12px;font-weight:400;color:#343741;letter-spacing:0.37px;">event created low alert Spike in Logon Events [Custom].</div>
<div class="a" style="left:1106px;top:840px;width:12px;height:1px;background:#4a4e58;"></div>
<div class="a" style="left:1206px;top:840px;width:12px;height:1px;background:#4a4e58;"></div>
<div class="a" style="left:1306px;top:840px;width:12px;height:1px;background:#4a4e58;"></div>
<div class="a" style="left:1406px;top:840px;width:12px;height:1px;background:#4a4e58;"></div>
<div class="a" style="left:1506px;top:840px;width:12px;height:1px;background:#4a4e58;"></div>
<div class="a" style="left:1606px;top:840px;width:12px;height:1px;background:#4a4e58;"></div>
<div class="a" style="left:32px;top:866px;width:16px;height:16px;box-sizing:border-box;border:1px solid #c6c8cc;border-radius:4px;background:#fff;"></div>
<svg style="left:68px;top:867px;" width="14" height="14" viewBox="0 0 14 14"><path d="M0.6 9 V13.6 H5 M9.2 0.5 H13.6 V5" fill="none" stroke="#2d6fc7" stroke-width="1.1"/><path d="M2.6 11.4 L12.8 1.2" fill="none" stroke="#2d6fc7" stroke-width="0.9"/></svg>
<svg style="left:91px;top:866px;" width="15" height="15" viewBox="0 0 15 15"><rect x="5.7" y="0.6" width="3.7" height="2.8" rx="0.6" fill="none" stroke="#2d6fc7" stroke-width="1.05"/><path d="M6.8 3.6 L7.55 4.9 L8.3 3.6 Z" fill="#2d6fc7"/><path d="M0.3 7.45 L1.4 6.8 M0.3 7.45 L1.4 8.1 M14.8 7.45 L13.7 6.8 M14.8 7.45 L13.7 8.1 M0.4 7.45 H14.7" stroke="#2d6fc7" stroke-width="1"/><rect x="0.7" y="11.3" width="3.7" height="3.1" rx="0.6" fill="none" stroke="#2d6fc7" stroke-width="1.05"/><rect x="10.7" y="11.3" width="3.7" height="3.1" rx="0.6" fill="none" stroke="#2d6fc7" stroke-width="1.05"/><path d="M1.8 11 L2.55 9.9 L3.3 11 Z M11.8 11 L12.55 9.9 L13.3 11 Z" fill="#2d6fc7"/><circle cx="2.5" cy="7.45" r="1.1" fill="#fff" stroke="#2d6fc7" stroke-width="0.95"/><circle cx="7.5" cy="7.45" r="1.1" fill="#fff" stroke="#2d6fc7" stroke-width="0.95"/><circle cx="12.5" cy="7.45" r="1.1" fill="#fff" stroke="#2d6fc7" stroke-width="0.95"/></svg>
<svg style="left:119px;top:872px;" width="16" height="4" viewBox="0 0 16 4"><rect x="0.5" y="0.5" width="3" height="3" fill="none" stroke="#2d6fc7" stroke-width="1"/><rect x="6.5" y="0.5" width="3" height="3" fill="none" stroke="#2d6fc7" stroke-width="1"/><rect x="12.5" y="0.5" width="3" height="3" fill="none" stroke="#2d6fc7" stroke-width="1"/></svg>
<div class="a" style="left:172px;top:867px;font-size:12px;font-weight:400;color:#343741;letter-spacing:0.91px;">2022-08-19T22:38:02.079Z</div>
<div class="a" style="left:371px;top:867px;font-size:12px;font-weight:400;color:#2f6fc6;letter-spacing:0.32px;">Spike in Logon Events [Cus...</div>
<div class="a" style="left:551px;top:867px;font-size:12px;font-weight:400;color:#343741;letter-spacing:0.2px;">low</div>
<div class="a" style="left:656px;top:867px;font-size:12px;font-weight:400;color:#343741;letter-spacing:0.37px;">event created low alert Spike in Logon Events [Custom].</div>
<div class="a" style="left:1106px;top:874px;width:12px;height:1px;background:#4a4e58;"></div>
<div class="a" style="left:1206px;top:874px;width:12px;height:1px;background:#4a4e58;"></div>
<div class="a" style="left:1306px;top:874px;width:12px;height:1px;background:#4a4e58;"></div>
<div class="a" style="left:1406px;top:874px;width:12px;height:1px;background:#4a4e58;"></div>
<div class="a" style="left:1506px;top:874px;width:12px;height:1px;background:#4a4e58;"></div>
<div class="a" style="left:1606px;top:874px;width:12px;height:1px;background:#4a4e58;"></div>
<div class="a" style="left:32px;top:900px;width:16px;height:16px;box-sizing:border-box;border:1px solid #c6c8cc;border-radius:4px;background:#fff;"></div>
<svg style="left:68px;top:901px;" width="14" height="14" viewBox="0 0 14 14"><path d="M0.6 9 V13.6 H5 M9.2 0.5 H13.6 V5" fill="none" stroke="#2d6fc7" stroke-width="1.1"/><path d="M2.6 11.4 L12.8 1.2" fill="none" stroke="#2d6fc7" stroke-width="0.9"/></svg>
<svg style="left:91px;top:900px;" width="15" height="15" viewBox="0 0 15 15"><rect x="5.7" y="0.6" width="3.7" height="2.8" rx="0.6" fill="none" stroke="#2d6fc7" stroke-width="1.05"/><path d="M6.8 3.6 L7.55 4.9 L8.3 3.6 Z" fill="#2d6fc7"/><path d="M0.3 7.45 L1.4 6.8 M0.3 7.45 L1.4 8.1 M14.8 7.45 L13.7 6.8 M14.8 7.45 L13.7 8.1 M0.4 7.45 H14.7" stroke="#2d6fc7" stroke-width="1"/><rect x="0.7" y="11.3" width="3.7" height="3.1" rx="0.6" fill="none" stroke="#2d6fc7" stroke-width="1.05"/><rect x="10.7" y="11.3" width="3.7" height="3.1" rx="0.6" fill="none" stroke="#2d6fc7" stroke-width="1.05"/><path d="M1.8 11 L2.55 9.9 L3.3 11 Z M11.8 11 L12.55 9.9 L13.3 11 Z" fill="#2d6fc7"/><circle cx="2.5" cy="7.45" r="1.1" fill="#fff" stroke="#2d6fc7" stroke-width="0.95"/><circle cx="7.5" cy="7.45" r="1.1" fill="#fff" stroke="#2d6fc7" stroke-width="0.95"/><circle cx="12.5" cy="7.45" r="1.1" fill="#fff" stroke="#2d6fc7" stroke-width="0.95"/></svg>
<svg style="left:119px;top:906px;" width="16" height="4" viewBox="0 0 16 4"><rect x="0.5" y="0.5" width="3" height="3" fill="none" stroke="#2d6fc7" stroke-width="1"/><rect x="6.5" y="0.5" width="3" height="3" fill="none" stroke="#2d6fc7" stroke-width="1"/><rect x="12.5" y="0.5" width="3" height="3" fill="none" stroke="#2d6fc7" stroke-width="1"/></svg>
<div class="a" style="left:172px;top:901px;font-size:12px;font-weight:400;color:#343741;letter-spacing:0.91px;">2022-08-19T21:58:51.508Z</div>
<div class="a" style="left:371px;top:901px;font-size:12px;font-weight:400;color:#2f6fc6;letter-spacing:0.32px;">Spike in Logon Events [Cus...</div>
<div class="a" style="left:551px;top:901px;font-size:12px;font-weight:400;color:#343741;letter-spacing:0.2px;">low</div>
<div class="a" style="left:656px;top:901px;font-size:12px;font-weight:400;color:#343741;letter-spacing:0.37px;">event created low alert Spike in Logon Events [Custom].</div>
<div class="a" style="left:1106px;top:908px;width:12px;height:1px;background:#4a4e58;"></div>
<div class="a" style="left:1206px;top:908px;width:12px;height:1px;background:#4a4e58;"></div>
<div class="a" style="left:1306px;top:908px;width:12px;height:1px;background:#4a4e58;"></div>
<div class="a" style="left:1406px;top:908px;width:12px;height:1px;background:#4a4e58;"></div>
<div class="a" style="left:1506px;top:908px;width:12px;height:1px;background:#4a4e58;"></div>
<div class="a" style="left:1606px;top:908px;width:12px;height:1px;background:#4a4e58;"></div>
<div class="a" style="left:32px;top:934px;width:16px;height:16px;box-sizing:border-box;border:1px solid #c6c8cc;border-radius:4px;background:#fff;"></div>
<svg style="left:68px;top:935px;" width="14" height="14" viewBox="0 0 14 14"><path d="M0.6 9 V13.6 H5 M9.2 0.5 H13.6 V5" fill="none" stroke="#2d6fc7" stroke-width="1.1"/><path d="M2.6 11.4 L12.8 1.2" fill="none" stroke="#2d6fc7" stroke-width="0.9"/></svg>
<svg style="left:91px;top:934px;" width="15" height="15" viewBox="0 0 15 15"><rect x="5.7" y="0.6" width="3.7" height="2.8" rx="0.6" fill="none" stroke="#2d6fc7" stroke-width="1.05"/><path d="M6.8 3.6 L7.55 4.9 L8.3 3.6 Z" fill="#2d6fc7"/><path d="M0.3 7.45 L1.4 6.8 M0.3 7.45 L1.4 8.1 M14.8 7.45 L13.7 6.8 M14.8 7.45 L13.7 8.1 M0.4 7.45 H14.7" stroke="#2d6fc7" stroke-width="1"/><rect x="0.7" y="11.3" width="3.7" height="3.1" rx="0.6" fill="none" stroke="#2d6fc7" stroke-width="1.05"/><rect x="10.7" y="11.3" width="3.7" height="3.1" rx="0.6" fill="none" stroke="#2d6fc7" stroke-width="1.05"/><path d="M1.8 11 L2.55 9.9 L3.3 11 Z M11.8 11 L12.55 9.9 L13.3 11 Z" fill="#2d6fc7"/><circle cx="2.5" cy="7.45" r="1.1" fill="#fff" stroke="#2d6fc7" stroke-width="0.95"/><circle cx="7.5" cy="7.45" r="1.1" fill="#fff" stroke="#2d6fc7" stroke-width="0.95"/><circle cx="12.5" cy="7.45" r="1.1" fill="#fff" stroke="#2d6fc7" stroke-width="0.95"/></svg>
<svg style="left:119px;top:940px;" width="16" height="4" viewBox="0 0 16 4"><rect x="0.5" y="0.5" width="3" height="3" fill="none" stroke="#2d6fc7" stroke-width="1"/><rect x="6.5" y="0.5" width="3" height="3" fill="none" stroke="#2d6fc7" stroke-width="1"/><rect x="12.5" y="0.5" width="3" height="3" fill="none" stroke="#2d6fc7" stroke-width="1"/></svg>
<div class="a" style="left:172px;top:935px;font-size:12px;font-weight:400;color:#343741;letter-spacing:0.91px;">2022-08-19T21:20:00.011Z</div>
<div class="a" style="left:371px;top:935px;font-size:12px;font-weight:400;color:#2f6fc6;letter-spacing:0.32px;">Spike in Logon Events [Cus...</div>
<div class="a" style="left:551px;top:935px;font-size:12px;font-weight:400;color:#343741;letter-spacing:0.2px;">low</div>
<div class="a" style="left:656px;top:935px;font-size:12px;font-weight:400;color:#343741;letter-spacing:0.37px;">event created low alert Spike in Logon Events [Custom].</div>
<div class="a" style="left:1106px;top:942px;width:12px;height:1px;background:#4a4e58;"></div>
<div class="a" style="left:1206px;top:942px;width:12px;height:1px;background:#4a4e58;"></div>
<div class="a" style="left:1306px;top:942px;width:12px;height:1px;background:#4a4e58;"></div>
<div class="a" style="left:1406px;top:942px;width:12px;height:1px;background:#4a4e58;"></div>
<div class="a" style="left:1506px;top:942px;width:12px;height:1px;background:#4a4e58;"></div>
<div class="a" style="left:1606px;top:942px;width:12px;height:1px;background:#4a4e58;"></div>
</body></html>
